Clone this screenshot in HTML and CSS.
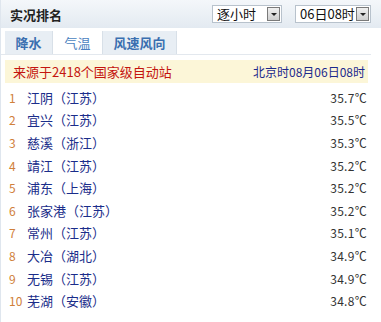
FILE: index.html
```html
<!DOCTYPE html>
<html lang="zh">
<head>
<meta charset="utf-8">
<link rel="stylesheet" href="styles.css">
</head>
<body>
<div class="widget">
  <div class="header">
    <span class="title">实况排名</span>
    <div class="selects">
      <div class="select sel1"><span class="val">逐小时</span><span class="arrow"></span></div>
      <div class="select sel2"><span class="val">06日08时</span><span class="arrow"></span></div>
    </div>
  </div>
  <div class="tabs">
    <div class="tab t1">降水</div>
    <div class="tab t2 active">气温</div>
    <div class="tab t3">风速风向</div>
  </div>
  <div class="info">
    <span class="src">来源于2418个国家级自动站</span>
    <span class="time">北京时08月06日08时</span>
  </div>
  <ul class="list">
    <li><span class="rank">1</span><span class="name">江阴（江苏）</span><span class="temp">35.7℃</span></li>
    <li><span class="rank">2</span><span class="name">宜兴（江苏）</span><span class="temp">35.5℃</span></li>
    <li><span class="rank">3</span><span class="name">慈溪（浙江）</span><span class="temp">35.3℃</span></li>
    <li><span class="rank">4</span><span class="name">靖江（江苏）</span><span class="temp">35.2℃</span></li>
    <li><span class="rank">5</span><span class="name">浦东（上海）</span><span class="temp">35.2℃</span></li>
    <li><span class="rank">6</span><span class="name">张家港（江苏）</span><span class="temp">35.2℃</span></li>
    <li><span class="rank">7</span><span class="name">常州（江苏）</span><span class="temp">35.1℃</span></li>
    <li><span class="rank">8</span><span class="name">大冶（湖北）</span><span class="temp">34.9℃</span></li>
    <li><span class="rank">9</span><span class="name">无锡（江苏）</span><span class="temp">34.9℃</span></li>
    <li><span class="rank">10</span><span class="name">芜湖（安徽）</span><span class="temp">34.8℃</span></li>
  </ul>
</div>
</body>
</html>
```
FILE: styles.css
```css
* { box-sizing: border-box; }
html, body { margin: 0; padding: 0; background: #fff; }
body {
  font-family: "Noto Sans CJK SC", "Liberation Sans", sans-serif;
  font-size: 12px;
  color: #333;
}
.widget {
  width: 381px;
  height: 322px;
  border-left: 1px solid #dfe6ee;
  overflow: hidden;
}
.header {
  height: 28px;
  background: linear-gradient(#f4f7fa, #e3eaf1);
  display: flex;
  align-items: center;
  justify-content: space-between;
  padding: 0 10px 0 9px;
}
.title {
  font-size: 13px;
  font-weight: bold;
  color: #222;
}
.selects { display: flex; gap: 13px; align-items: center; }
.select {
  height: 18px;
  background: #fff;
  border: 1px solid #b8c2cc;
  display: flex;
  align-items: center;
  justify-content: space-between;
  padding: 0 1px 0 4px;
  font-size: 13px;
  color: #111;
}
.sel1 { width: 70px; }
.sel2 { width: 76px; }
.select .val { line-height: 16px; }
.select .arrow {
  width: 13px;
  height: 14px;
  background: linear-gradient(#f0f0f0, #cfcfcf);
  border: 1px solid #7a7a7a;
  position: relative;
}
.select .arrow::after {
  content: "";
  position: absolute;
  left: 3px;
  top: 5px;
  border-left: 3px solid transparent;
  border-right: 3px solid transparent;
  border-top: 3px solid #222;
}
.tabs {
  display: flex;
  padding: 3px 0 0 4px;
  margin-right: 10px;
  border-bottom: 1px solid #e3e8ee;
  height: 27px;
}
.tab {
  height: 23px;
  display: flex;
  align-items: center;
  justify-content: center;
  font-size: 13px;
  color: #3a6fb0;
  background: #e8eef4;
  border-right: 1px solid #d8e0e8;
}
.t1 { width: 48px; font-weight: bold; }
.t2 { width: 50px; background: #fff; color: #4a7fc0; }
.t3 { width: 74px; font-weight: bold; }
.info {
  margin: 5px 13px 0 4px;
  height: 23px;
  background: #fcf6d8;
  display: flex;
  align-items: center;
  justify-content: space-between;
  padding: 0 3px 0 8px;
}
.src { color: #c4150f; font-size: 13px; }
.time { color: #1c2a8c; font-size: 12px; }
.list {
  list-style: none;
  margin: 3px 14px 0 0;
  padding: 0;
}
.list li {
  height: 22.6px;
  display: flex;
  align-items: center;
}
.rank {
  width: 26px;
  padding-left: 8px;
  color: #d0803a;
  font-size: 12px;
}
.name {
  flex: 1;
  color: #1a2d8a;
  font-size: 13px;
}
.temp {
  color: #333;
  font-size: 12px;
  letter-spacing: 0.3px;
}
```
